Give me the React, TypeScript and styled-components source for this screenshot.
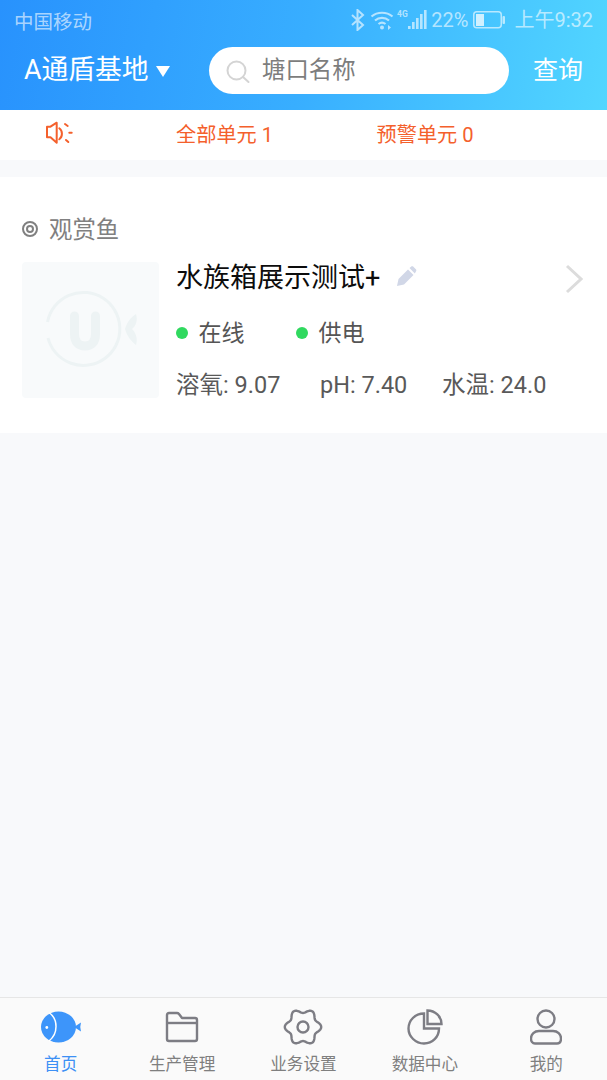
import React from "react";
import styled, { createGlobalStyle } from "styled-components";

const Global = createGlobalStyle`
  html, body { margin: 0; padding: 0; background: #f8f9fb; }
  * { box-sizing: border-box; }
  body { font-family: Roboto, "Noto Sans CJK SC", sans-serif; }
`;

const Page = styled.div`
  width: 607px;
  height: 1080px;
  display: flex;
  flex-direction: column;
  background: #f8f9fb;
  overflow: hidden;
`;

const Header = styled.header`
  height: 110px;
  flex: none;
  background: linear-gradient(100deg, #2892fd 0%, #38aeff 50%, #52d6ff 100%);
  display: flex;
  flex-direction: column;
`;

const StatusBar = styled.div`
  height: 42px;
  flex: none;
  display: flex;
  align-items: center;
  padding: 0 14px 2px 14px;
  color: rgba(255, 255, 255, 0.62);
  font-size: 19.5px;
`;

const Carrier = styled.span`
  flex: 1;
`;

const StatusIcons = styled.div`
  display: flex;
  align-items: center;
  font-size: 20px;
`;

const StatusText = styled.span<{ $ml: number }>`
  margin-left: ${(p) => p.$ml}px;
  line-height: 1;
`;

const StatusGlyph = styled.span<{ $ml: number }>`
  margin-left: ${(p) => p.$ml}px;
  display: flex;
`;

const SearchRow = styled.div`
  display: flex;
  align-items: center;
  padding: 5px 24px 0 24px;
  height: 52px;
`;

const SiteTitle = styled.div`
  width: 185px;
  flex: none;
  display: flex;
  align-items: center;
  color: #fff;
  font-size: 26.8px;
  line-height: 1;
`;

const Caret = styled.span`
  margin-left: 7px;
  margin-top: 2px;
  width: 0;
  height: 0;
  border-left: 7px solid transparent;
  border-right: 7px solid transparent;
  border-top: 11px solid #fff;
`;

const SearchBox = styled.div`
  width: 300px;
  height: 47px;
  flex: none;
  background: #fff;
  border-radius: 24px;
  display: flex;
  align-items: center;
  padding-left: 17px;
  color: #7d7d7d;
  font-size: 23.4px;
  gap: 12px;
`;

const Placeholder = styled.span`
  margin-top: -5px;
`;

const QueryLabel = styled.div`
  margin-left: 24px;
  padding-bottom: 6px;
  color: #fff;
  font-size: 25px;
`;

const AlertBar = styled.div`
  height: 50px;
  flex: none;
  background: #fff;
  display: flex;
  align-items: center;
  color: #f4602c;
  font-size: 20.2px;
  padding: 0 0 3px 44px;
`;

const AlertIconWrap = styled.div`
  width: 132px;
  flex: none;
  display: flex;
  align-items: center;
`;

const AlertStat = styled.span`
  width: 200.5px;
  flex: none;
`;

const Card = styled.section`
  margin-top: 17px;
  height: 256px;
  flex: none;
  background: #fff;
  padding: 35px 22px 0;
`;

const Category = styled.div`
  display: flex;
  align-items: center;
  gap: 11px;
  height: 31px;
  color: #808080;
  font-size: 23.4px;
`;

const CategoryIcon = styled.span`
  display: flex;
  margin-top: 2px;
`;

const Unit = styled.div`
  margin-top: 19px;
  display: flex;
`;

const Thumb = styled.div`
  width: 137px;
  height: 136px;
  flex: none;
  border-radius: 4px;
  background: #f8fafb;
  display: flex;
`;

const UnitBody = styled.div`
  margin-left: 17px;
  flex: 1;
  display: flex;
  flex-direction: column;
`;

const TitleRow = styled.div`
  display: flex;
  align-items: center;
  height: 32px;
  padding-bottom: 6px;
  color: #0c0c0c;
  font-size: 27px;
  white-space: nowrap;
`;

const EditIcon = styled.span`
  margin-left: 16px;
  margin-top: 2px;
  display: flex;
`;

const Chevron = styled.span`
  margin-left: auto;
  margin-right: 2px;
  display: flex;
  margin-top: 7px;
`;

const StatusRow = styled.div`
  margin-top: 22px;
  height: 32px;
  padding-bottom: 2px;
  display: flex;
  align-items: center;
  color: #555;
  font-size: 23px;
`;

const StatusItem = styled.span`
  width: 120px;
  display: flex;
  align-items: center;
  gap: 10.5px;
`;

const Dot = styled.i`
  width: 12px;
  height: 12px;
  margin-top: 3px;
  border-radius: 50%;
  background: #30d95f;
`;

const Metrics = styled.div`
  margin-top: 18px;
  height: 32px;
  display: flex;
  align-items: baseline;
  color: #595959;
  font-size: 23.5px;
`;

const Metric = styled.span<{ $w: number }>`
  width: ${(p) => p.$w}px;
  flex: none;
  white-space: nowrap;
`;

const Spacer = styled.div`
  flex: 1;
`;

const TabBar = styled.nav`
  height: 83px;
  flex: none;
  background: #fafafa;
  border-top: 1px solid #e6e6e6;
  display: flex;
`;

const Tab = styled.div<{ $active?: boolean }>`
  width: 121.4px;
  flex: none;
  display: flex;
  flex-direction: column;
  align-items: center;
  padding-top: 10px;
  color: ${(p) => (p.$active ? "#3d90f5" : "#7f7f7f")};
  font-size: 16.6px;
`;

const TabIcon = styled.div`
  height: 38px;
  display: flex;
  align-items: center;
  justify-content: center;
`;

const TabLabel = styled.span`
  margin-top: 7px;
  line-height: 24px;
`;

const Bluetooth = () => (
  <svg width="14" height="22" viewBox="0 0 14 22" fill="none" stroke="currentColor" strokeWidth="2">
    <path d="M1 6l11 10-5.500 5V1L12 6 1 16" />
  </svg>
);
const Wifi = () => (
  <svg width="24" height="20" viewBox="0 0 24 20" fill="none" stroke="currentColor" strokeWidth="2.200">
    <path d="M1.500 6.500c6-5 15-5 21 0M5 10.500c4-3.500 10-3.500 14 0M8.500 14c2-1.600 5-1.600 7 0" />
    <circle cx="12" cy="17.500" r="2" fill="currentColor" stroke="none" />
    <path d="M18 15l3 2.500-3 2.500z" fill="currentColor" stroke="none" />
  </svg>
);
const Signal = () => (
  <svg width="30" height="22" viewBox="0 0 30 22" fill="currentColor">
    <text x="0" y="8" fontSize="8.500" fontWeight="700" fontFamily="Roboto, sans-serif">4G</text>
    <rect x="11" y="17" width="2.600" height="3" />
    <rect x="15" y="13" width="2.600" height="7" />
    <rect x="19" y="9" width="2.600" height="11" />
    <rect x="23" y="5" width="2.600" height="15" />
    <rect x="27" y="1" width="2.600" height="19" />
  </svg>
);
const Battery = () => (
  <svg width="32" height="18" viewBox="0 0 32 18" fill="none">
    <rect x="0.750" y="0.750" width="27.500" height="16" rx="3" stroke="currentColor" strokeWidth="1.500" />
    <rect x="3" y="3" width="8" height="12" fill="rgba(255,255,255,.75)" />
    <rect x="29.500" y="5" width="2.500" height="8" rx="1" fill="currentColor" />
  </svg>
);
const SearchIcon = () => (
  <svg width="24" height="24" viewBox="0 0 24 24" fill="none" stroke="#d4d4d4" strokeWidth="2" style={{ marginTop: 3, flex: "none" }}>
    <circle cx="10.500" cy="10.500" r="9" />
    <path d="M17 17l5.500 5" strokeLinecap="round" />
  </svg>
);
const Speaker = () => (
  <svg width="30" height="24" viewBox="0 0 30 24" fill="none" stroke="#f4602c" strokeWidth="2" strokeLinejoin="round" style={{ marginTop: -1 }}>
    <path d="M3 5.700h3.500L12.700 1.700v20l-6.200-5.400H3z" />
    <path d="M15.300 7.300c3.500 2.500 3.500 8.500 0 11" strokeLinecap="round" />
    <path d="M21 3l2.700 2M25.300 11.700h2.400M22 19l2.300 2" strokeLinecap="round" />
  </svg>
);
const Target = () => (
  <svg width="16" height="16" viewBox="0 0 16 16" fill="none" stroke="#808080">
    <circle cx="8" cy="8" r="7" strokeWidth="2" />
    <circle cx="8" cy="8" r="3" strokeWidth="2" />
  </svg>
);
const Logo = () => (
  <svg width="137" height="136" viewBox="0 0 137 136" fill="none" stroke="#edf3f4">
    <path d="M25.500 60A36.500 36.500 0 1 1 26 76" strokeWidth="3" />
    <path d="M52.500 54v18c0 8 4 12 10.500 12s10.500-4 10.500-12V54" strokeWidth="9" strokeLinecap="round" />
    <path d="M103 67C105 60 109 55 114 52C116 58 114 64 110 67C114 71 116 77 114 83C109 79 105 74 103 67z" fill="#edf3f4" stroke="none" />
  </svg>
);
const Pencil = () => (
  <svg width="21" height="21" viewBox="0 0 21 21" fill="#d1d7e7">
    <path d="M1 20l1.500-7L12 3.500l5.500 5.500L8 18.500z" />
    <path d="M13.500 2l1.500-1.300c.8-.6 1.700-.6 2.400 0l2.500 2.500c.6.700.6 1.600 0 2.300L18.800 7.400z" />
  </svg>
);
const ChevronIcon = () => (
  <svg width="18" height="30" viewBox="0 0 18 30" fill="none" stroke="#dcdcdc" strokeWidth="3">
    <path d="M2 2l14 13L2 28" />
  </svg>
);

const FishIcon = () => (
  <svg width="40" height="32" viewBox="0 0 40 32">
    <ellipse cx="17.500" cy="16" rx="17.500" ry="15.500" fill="#3d95fa" />
    <path d="M33 16L40 11.500Q38.500 16 40 20.500z" fill="#3d95fa" />
    <path d="M8 1.500C13 5 15 10 15 15.500S13 26 8 30" fill="none" stroke="#fff" strokeWidth="1.500" />
    <circle cx="5.800" cy="16.500" r="1.400" fill="#fff" />
  </svg>
);
const FolderIcon = () => (
  <svg width="34" height="32" viewBox="0 0 34 32" fill="none" stroke="#7d7d84" strokeWidth="2.400" strokeLinejoin="round">
    <path d="M2 28V4c0-1 .8-2 2-2h8c1 0 1.500.4 2 1l3 4h13c1.200 0 2 1 2 2v19c0 1-.8 2-2 2H4c-1.200 0-2-1-2-2z" />
    <path d="M2 12h30" />
  </svg>
);

const gearPath =
  Array.from({ length: 120 }, (_, i) => {
    const t = (i / 120) * Math.PI * 2;
    const r = 16.1 + 2.1 * Math.cos(6 * t);
    return `${i === 0 ? "M" : "L"}${(20 + r * Math.cos(t)).toFixed(2)} ${(19 + r * Math.sin(t)).toFixed(2)}`;
  }).join("") + "z";

const GearIcon = () => (
  <svg width="40" height="38" viewBox="0 0 40 38" fill="none" stroke="#7d7d84" strokeWidth="2.400" strokeLinejoin="round">
    <path d={gearPath} />
    <circle cx="20" cy="19" r="5.500" />
  </svg>
);
const PieIcon = () => (
  <svg width="36" height="36" viewBox="0 0 36 36" fill="none" stroke="#7d7d84" strokeWidth="2.400">
    <path d="M17 4.500C8 4.500 1.500 11.500 1.500 19.500S8.500 34.500 17 34.500s15-6.500 15-15H17z" />
    <path d="M20.500 1.500c7.500 0 14 6 14 13.500H20.500z" />
  </svg>
);
const UserIcon = () => (
  <svg width="32" height="36" viewBox="0 0 32 36" fill="none" stroke="#7d7d84" strokeWidth="2.400">
    <circle cx="16" cy="10" r="8.500" />
    <path d="M9 22h14c4.500 0 8 3 8 7.500 0 3-1.500 5-4 5H5c-2.500 0-4-2-4-5C1 25 4.500 22 9 22z" />
  </svg>
);

const tabs = [
  { label: "首页", icon: <FishIcon />, active: true },
  { label: "生产管理", icon: <FolderIcon /> },
  { label: "业务设置", icon: <GearIcon /> },
  { label: "数据中心", icon: <PieIcon /> },
  { label: "我的", icon: <UserIcon /> },
];

export default function App() {
  return (
    <Page>
      <Global />
      <Header>
        <StatusBar>
          <Carrier>中国移动</Carrier>
          <StatusIcons>
            <Bluetooth />
            <StatusGlyph $ml={5}><Wifi /></StatusGlyph>
            <StatusGlyph $ml={3}><Signal /></StatusGlyph>
            <StatusText $ml={4}>22%</StatusText>
            <StatusGlyph $ml={5}><Battery /></StatusGlyph>
            <StatusText $ml={9}>上午9:32</StatusText>
          </StatusIcons>
        </StatusBar>
        <SearchRow>
          <SiteTitle>
            A通盾基地
            <Caret />
          </SiteTitle>
          <SearchBox>
            <SearchIcon />
            <Placeholder>塘口名称</Placeholder>
          </SearchBox>
          <QueryLabel>查询</QueryLabel>
        </SearchRow>
      </Header>
      <AlertBar>
        <AlertIconWrap>
          <Speaker />
        </AlertIconWrap>
        <AlertStat>全部单元 1</AlertStat>
        <AlertStat>预警单元 0</AlertStat>
      </AlertBar>
      <Card>
        <Category>
          <CategoryIcon>
            <Target />
          </CategoryIcon>
          观赏鱼
        </Category>
        <Unit>
          <Thumb>
            <Logo />
          </Thumb>
          <UnitBody>
            <TitleRow>
              水族箱展示测试+
              <EditIcon>
                <Pencil />
              </EditIcon>
              <Chevron>
                <ChevronIcon />
              </Chevron>
            </TitleRow>
            <StatusRow>
              <StatusItem>
                <Dot />
                在线
              </StatusItem>
              <StatusItem>
                <Dot />
                供电
              </StatusItem>
            </StatusRow>
            <Metrics>
              <Metric $w={144}>溶氧: 9.07</Metric>
              <Metric $w={122}>pH: 7.40</Metric>
              <Metric $w={110}>水温: 24.0</Metric>
            </Metrics>
          </UnitBody>
        </Unit>
      </Card>
      <Spacer />
      <TabBar>
        {tabs.map((t) => (
          <Tab key={t.label} $active={t.active}>
            <TabIcon>{t.icon}</TabIcon>
            <TabLabel>{t.label}</TabLabel>
          </Tab>
        ))}
      </TabBar>
    </Page>
  );
}
